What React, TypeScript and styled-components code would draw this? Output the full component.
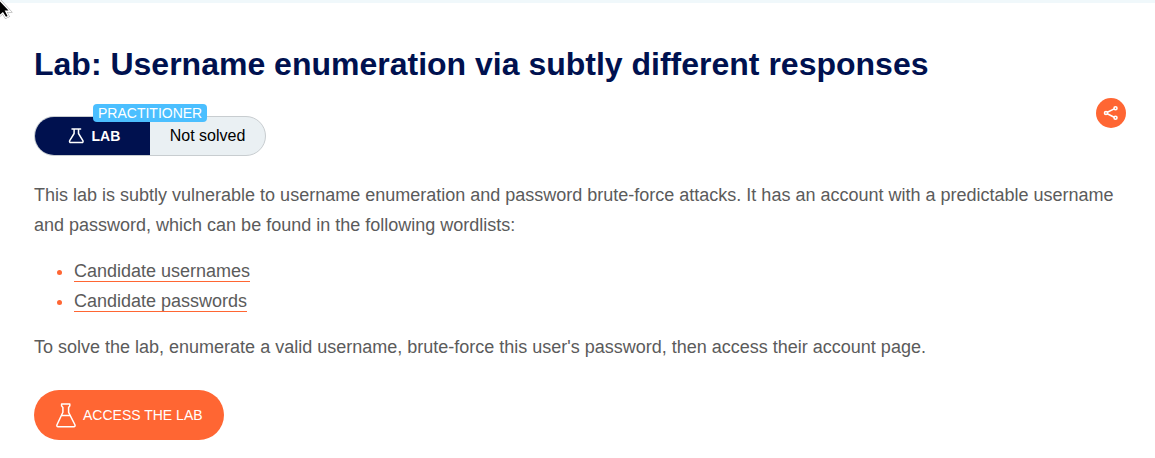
import React from 'react';
import styled, { createGlobalStyle } from 'styled-components';

const GlobalStyle = createGlobalStyle`
  * { box-sizing: border-box; }
  body {
    margin: 0;
    background: #fff;
    color: #5b5b5b;
    font-family: Arial, "Liberation Sans", sans-serif;
    overflow: hidden;
  }
`;

const Page = styled.div`
  height: 458px;
  border-top: 3px solid #f0f8fb;
`;

const Content = styled.main`
  padding: 42px 29px 0 34px;
`;

const Title = styled.h1`
  margin: 0;
  height: 38px;
  line-height: 38px;
  font-size: 32px;
  font-weight: 700;
  color: #00114f;
  white-space: nowrap;
`;

const StatusRow = styled.div`
  display: flex;
  justify-content: space-between;
  align-items: flex-start;
  margin-top: 15px;
  height: 58px;
`;

const Status = styled.div`
  position: relative;
  display: flex;
  width: 232px;
  height: 40px;
  margin-top: 18px;
  border: 1px solid #c8cdd0;
  border-radius: 20px;
  background: #eaf0f3;
`;

const LabTag = styled.div`
  display: flex;
  align-items: center;
  width: 115px;
  padding-left: 33px;
  gap: 6.5px;
  border-radius: 19px 0 0 19px;
  background: #00114f;
  color: #fff;
  font-size: 14px;
  font-weight: 700;
`;

const StatusText = styled.div`
  flex: 1;
  text-align: center;
  font-size: 16px;
  line-height: 37px;
  color: #000;
`;

const Level = styled.span`
  position: absolute;
  left: 58px;
  top: -13px;
  height: 18px;
  padding: 0 5px;
  border-radius: 4px;
  background: #4bbfff;
  color: #fff;
  font-size: 14px;
  line-height: 18px;
`;

const ShareButton = styled.button`
  display: flex;
  align-items: center;
  justify-content: center;
  width: 30px;
  height: 30px;
  padding: 0;
  border: 0;
  border-radius: 50%;
  background: #ff6633;
`;

const Paragraph = styled.p`
  margin: 0;
  font-size: 18px;
  line-height: 30px;
`;

const Description = styled.section`
  margin-top: 24px;
`;

const WordLists = styled.ul`
  margin: 16px 0;
  padding-left: 40px;
  font-size: 18px;
  line-height: 30px;
  list-style: none;
`;

const WordList = styled.li`
  display: flex;
  align-items: center;
  height: 30px;

  &::before {
    content: '';
    width: 5px;
    height: 5px;
    margin: 3px 12px 0 -17px;
    border-radius: 50%;
    background: #ff6633;
  }
`;

const WordLink = styled.a`
  height: 22px;
  line-height: 22px;
  margin-bottom: 1px;
  border-bottom: 1px solid #ff6633;
`;

const AccessButton = styled.button`
  display: flex;
  align-items: center;
  width: 190px;
  height: 50px;
  margin-top: 28px;
  padding: 0 0 0 22px;
  gap: 7px;
  border: 0;
  border-radius: 25px;
  background: #ff6633;
  color: #fff;
  font: 14px Arial, "Liberation Sans", sans-serif;
  white-space: nowrap;
`;

const Pointer = styled.svg`
  position: absolute;
  left: 0;
  top: 0;
`;

const SmallFlask = () => (
  <svg width="17" height="16" viewBox="0 0 17 16" fill="none" stroke="#fff" strokeWidth="1.5" strokeLinejoin="round" strokeLinecap="round">
    <path d="M4 1h8.6M6.1 1.2v4.3L1.7 12.7c-.5 1 .1 1.9 1.1 1.9h11c1 0 1.6-.9 1.1-1.9l-4.4-7.2V1.2" />
  </svg>
);

const LargeFlask = () => (
  <svg width="20" height="25" viewBox="0 0 20 25" fill="none" stroke="#fff" strokeWidth="1.5" strokeLinejoin="round" strokeLinecap="round">
    <path d="M5.6 1h8.2v1.9l-1.2 1.6v4.8l6.2 12.2c.6 1.2.1 2.3-1 2.3H2.1c-1.1 0-1.6-1.1-1-2.3L6.9 9.3V4.5L5.6 2.9V1Z" />
    <path d="M5.9 12.4h7.9" />
  </svg>
);

const ShareIcon = () => (
  <svg width="16" height="16" viewBox="0 0 16 16" fill="none" stroke="#fff" strokeWidth="1.6">
    <path d="m4.3 7.2 6.9-3.3M4.3 8.8l6.9 3.4" />
    <circle cx="3" cy="8" r="1.5" />
    <circle cx="12.5" cy="3.2" r="1.5" />
    <circle cx="12.5" cy="12.7" r="1.5" />
  </svg>
);

export default function App() {
  return (
    <Page>
      <GlobalStyle />
      <Content>
        <Title>Lab: Username enumeration via subtly different responses</Title>
        <StatusRow>
          <Status>
            <LabTag><SmallFlask />LAB</LabTag>
            <StatusText>Not solved</StatusText>
            <Level>PRACTITIONER</Level>
          </Status>
          <ShareButton aria-label="Share"><ShareIcon /></ShareButton>
        </StatusRow>
        <Description>
          <Paragraph>
            This lab is subtly vulnerable to username enumeration and password brute-force attacks. It has an account with a predictable username and password, which can be found in the following wordlists:
          </Paragraph>
          <WordLists>
            <WordList><WordLink>Candidate usernames</WordLink></WordList>
            <WordList><WordLink>Candidate passwords</WordLink></WordList>
          </WordLists>
          <Paragraph>
            To solve the lab, enumerate a valid username, brute-force this user's password, then access their account page.
          </Paragraph>
        </Description>
        <AccessButton><LargeFlask />ACCESS THE LAB</AccessButton>
      </Content>
      <Pointer width="14" height="20" viewBox="0 0 14 20">
        <path d="M-6-6 10.2 11.3H5.8l2.6 5-2.7 1.3L2.8 13-2 17Z" fill="#000" stroke="#999" strokeWidth="2.2" />
        <path d="M-6-6 10.2 11.3H5.8l2.6 5-2.7 1.3L2.8 13-2 17Z" fill="#000" stroke="#fff" strokeWidth="1.4" />
      </Pointer>
    </Page>
  );
}
